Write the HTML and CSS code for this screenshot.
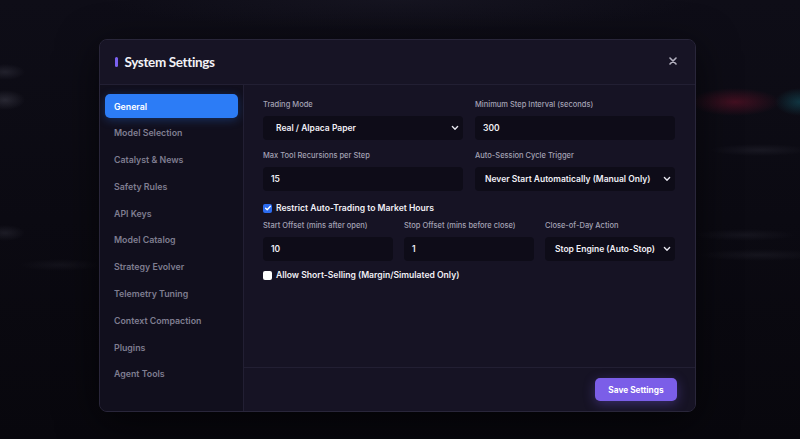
FILE: index.html
```html
<!DOCTYPE html>
<html>
<head>
<meta charset="utf-8">
<link rel="stylesheet" href="styles.css">
</head>
<body>
<div class="backdrop">
  <div class="modal">
    <div class="modal-header">
      <div class="title"><span class="title-bar"></span>System Settings</div>
      <button class="close" aria-label="Close">
        <svg width="8" height="8" viewBox="0 0 8 8"><path d="M1 1L7 7M7 1L1 7" stroke="#b4b2c0" stroke-width="1.6" stroke-linecap="round"/></svg>
      </button>
    </div>
    <div class="modal-body">
      <nav class="sidebar">
        <div class="nav-item active">General</div>
        <div class="nav-item">Model Selection</div>
        <div class="nav-item">Catalyst &amp; News</div>
        <div class="nav-item">Safety Rules</div>
        <div class="nav-item">API Keys</div>
        <div class="nav-item">Model Catalog</div>
        <div class="nav-item">Strategy Evolver</div>
        <div class="nav-item">Telemetry Tuning</div>
        <div class="nav-item">Context Compaction</div>
        <div class="nav-item">Plugins</div>
        <div class="nav-item">Agent Tools</div>
      </nav>
      <div class="main">
        <div class="content">
          <div class="grid2">
            <div class="field">
              <div class="label">Trading Mode</div>
              <div class="input select sel-wide"><span>Real / Alpaca Paper</span><svg class="chev" width="8" height="6" viewBox="0 0 8 6"><path d="M1.4 1.6L4 4.2L6.6 1.6" stroke="#e6e6ee" stroke-width="1.4" fill="none" stroke-linecap="round" stroke-linejoin="round"/></svg></div>
            </div>
            <div class="field">
              <div class="label">Minimum Step Interval (seconds)</div>
              <div class="input"><span>300</span></div>
            </div>
            <div class="field">
              <div class="label">Max Tool Recursions per Step</div>
              <div class="input"><span>15</span></div>
            </div>
            <div class="field">
              <div class="label">Auto-Session Cycle Trigger</div>
              <div class="input select"><span>Never Start Automatically (Manual Only)</span><svg class="chev" width="8" height="6" viewBox="0 0 8 6"><path d="M1.4 1.6L4 4.2L6.6 1.6" stroke="#e6e6ee" stroke-width="1.4" fill="none" stroke-linecap="round" stroke-linejoin="round"/></svg></div>
            </div>
          </div>
          <label class="check-row first">
            <span class="box checked"><svg width="8" height="8" viewBox="0 0 8 8"><path d="M1.6 4.2L3.2 5.8L6.4 2.3" stroke="#fff" stroke-width="1.3" fill="none" stroke-linecap="round" stroke-linejoin="round"/></svg></span>
            Restrict Auto-Trading to Market Hours
          </label>
          <div class="grid3">
            <div class="field">
              <div class="label">Start Offset (mins after open)</div>
              <div class="input"><span>10</span></div>
            </div>
            <div class="field">
              <div class="label">Stop Offset (mins before close)</div>
              <div class="input"><span>1</span></div>
            </div>
            <div class="field">
              <div class="label">Close-of-Day Action</div>
              <div class="input select"><span>Stop Engine (Auto-Stop)</span><svg class="chev" width="8" height="6" viewBox="0 0 8 6"><path d="M1.4 1.6L4 4.2L6.6 1.6" stroke="#e6e6ee" stroke-width="1.4" fill="none" stroke-linecap="round" stroke-linejoin="round"/></svg></div>
            </div>
          </div>
          <label class="check-row second">
            <span class="box"></span>
            Allow Short-Selling (Margin/Simulated Only)
          </label>
        </div>
        <div class="footer">
          <button class="save">Save Settings</button>
        </div>
      </div>
    </div>
  </div>
</div>
</body>
</html>
```
FILE: styles.css
```css
* { box-sizing: border-box; }
html, body { margin: 0; height: 100%; }
body {
  font-family: Inter, "Noto Sans", "Liberation Sans", sans-serif;
  background-color: #0b0a12;
  background-image:
    radial-gradient(ellipse 45px 14px at 735px 102px, rgba(120,20,45,0.5), transparent),
    radial-gradient(ellipse 25px 14px at 800px 102px, rgba(20,95,110,0.5), transparent),
    radial-gradient(ellipse 20px 8px at 5px 72px, rgba(80,80,95,0.3), transparent),
    radial-gradient(ellipse 20px 10px at 5px 100px, rgba(90,90,105,0.35), transparent),
    radial-gradient(ellipse 50px 6px at 760px 150px, rgba(70,70,85,0.22), transparent),
    radial-gradient(ellipse 50px 6px at 745px 235px, rgba(70,70,85,0.18), transparent),
    radial-gradient(ellipse 60px 6px at 760px 255px, rgba(70,70,85,0.18), transparent),
    radial-gradient(ellipse 20px 8px at 5px 233px, rgba(80,80,95,0.25), transparent),
    radial-gradient(ellipse 40px 6px at 60px 265px, rgba(70,70,85,0.15), transparent),
    radial-gradient(ellipse 300px 30px at 400px 0px, rgba(40,38,55,0.3), transparent),
    linear-gradient(#0e0d17, #08070d);
  overflow: hidden;
}
.backdrop {
  height: 100%;
  padding: 39px 0 0 99px;
}
.modal {
  width: 597px;
  height: 373px;
  background: #161324;
  border: 1px solid #29263a;
  border-radius: 8px;
  box-shadow: 0 10px 40px rgba(0,0,0,0.6);
  display: flex;
  flex-direction: column;
  overflow: hidden;
}
.modal-header {
  height: 45px;
  flex: none;
  display: flex;
  align-items: center;
  justify-content: space-between;
  padding: 0 16px 0 15px;
  border-bottom: 1px solid #221f33;
  background: #171425;
}
.title {
  display: flex;
  align-items: center;
  font-family: Lato, Inter, sans-serif;
  font-size: 13.5px;
  font-weight: 700;
  color: #f2f1f6;
  letter-spacing: -0.35px;
}
.title-bar {
  width: 2.5px;
  height: 10px;
  background: #7b61f0;
  border-radius: 2px;
  margin-right: 7px;
}
.close {
  background: none;
  border: none;
  padding: 0;
  width: 12px;
  height: 12px;
  display: flex;
  align-items: center;
  justify-content: center;
  margin-top: -2px;
}
.modal-body {
  flex: 1;
  display: flex;
  min-height: 0;
}
.sidebar {
  width: 144px;
  flex: none;
  border-right: 1px solid #221f33;
  background: #110f1d;
  padding: 9px 5px 0 5px;
  display: flex;
  flex-direction: column;
  gap: 2.8px;
}
.nav-item {
  height: 24px;
  display: flex;
  align-items: center;
  padding-left: 9px;
  border-radius: 5px;
  font-size: 8.8px;
  font-weight: 600;
  color: #7f7d90;
}
.nav-item.active {
  background: #2c7cf6;
  color: #ffffff;
  box-shadow: 0 2px 10px rgba(44,124,246,0.3);
}
.main {
  flex: 1;
  display: flex;
  flex-direction: column;
  min-width: 0;
  background: #161324;
}
.content {
  flex: 1;
  padding: 14px 20px 0 19px;
}
.grid2 {
  display: grid;
  grid-template-columns: minmax(0, 1fr) minmax(0, 1fr);
  column-gap: 12px;
  row-gap: 10px;
}
.grid3 {
  display: grid;
  grid-template-columns: minmax(0, 1fr) minmax(0, 1fr) minmax(0, 1fr);
  column-gap: 11px;
  margin-top: 6px;
}
.label {
  font-size: 7.5px;
  font-weight: 500;
  color: #a4a2b4;
  line-height: 11px;
  margin-bottom: 6px;
  white-space: nowrap;
}
.input {
  height: 24px;
  background: #0e0c18;
  border-radius: 4px;
  display: flex;
  align-items: center;
  justify-content: space-between;
  padding: 0 8px;
  font-size: 8.5px;
  font-weight: 600;
  color: #f1f0f6;
  white-space: nowrap;
  overflow: hidden;
}
.input.select { padding: 0 4px 0 10px; }
.input.sel-wide { padding-left: 13px; }
.chev { flex: none; }
.check-row {
  display: flex;
  align-items: center;
  gap: 4px;
  font-size: 8.6px;
  font-weight: 600;
  color: #f1f0f6;
  height: 12px;
}
.check-row.first { margin-top: 11px; }
.check-row.second { margin-top: 8px; }
.box {
  width: 9px;
  height: 9px;
  border-radius: 2px;
  background: #ffffff;
  display: flex;
  align-items: center;
  justify-content: center;
  flex: none;
}
.box.checked { background: #2c6cf0; }
.footer {
  height: 44px;
  flex: none;
  border-top: 1px solid #221f33;
  display: flex;
  justify-content: flex-end;
  align-items: flex-start;
  padding: 10px 18px 0 0;
}
.save {
  height: 23px;
  width: 82px;
  border: none;
  border-radius: 5px;
  background: #7b5ee8;
  color: #ffffff;
  font-family: inherit;
  font-size: 8.3px;
  font-weight: 700;
  box-shadow: 0 3px 12px rgba(123,94,232,0.35);
}
```
